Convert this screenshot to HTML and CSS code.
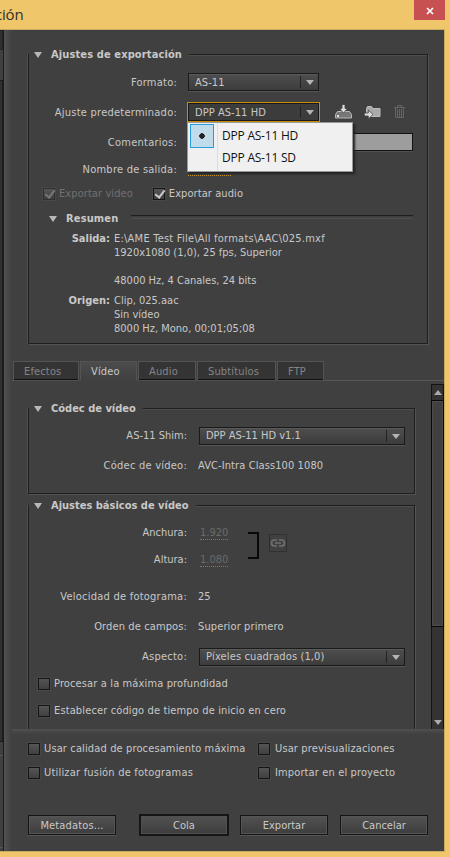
FILE: index.html
```
<!DOCTYPE html>
<html lang="es">
<head>
<meta charset="utf-8">
<title>Ajustes de exportación</title>
<link rel="stylesheet" href="styles.css">
</head>
<body>
<div class="window">
  <header class="titlebar"><span class="title">ción</span>
    <button class="close" aria-label="Cerrar"><svg width="8" height="8" viewBox="0 0 8 8"><path d="M1 1l6 6M7 1L1 7"/></svg></button>
  </header>
  <div class="body">
    <aside class="side"><div class="side-a"></div><div class="side-b"></div><div class="side-c"></div></aside>
    <div class="divider"></div>
    <main class="main">
      <section class="group export">
        <h2 class="legend wide"><i class="tri"></i>Ajustes de exportación</h2>
        <div class="row r30"><label>Formato:</label><div class="combo w131"><span>AS-11</span><i class="arrow"></i></div></div>
        <div class="row r30"><label>Ajuste predeterminado:</label><div class="combo w131 focus"><span>DPP AS-11 HD</span><i class="arrow"></i>
            <ul class="menu"><li class="sel">DPP AS-11 HD</li><li>DPP AS-11 SD</li></ul></div>
          <div class="tools">
            <svg width="17" height="16" viewBox="0 0 17 16"><path fill="#777" stroke="#b8b8b8" d="M2.500 7.500h12l2 3v3.500h-16v-3.500z"/><path fill="#ddd" stroke="#404040" stroke-width=".8" d="M7 .5h3v4h2.500L8.500 9l-4-4.500H7z"/><path fill="#e4e4e4" d="M2 11h2v2H2z"/></svg>
            <svg width="17" height="16" viewBox="0 0 17 16"><path fill="#aaa" stroke="#bbb" d="M2.500 10V4.500l1-2h4l1.500 2h7v8H6"/><path fill="#ddd" stroke="#404040" stroke-width=".8" d="M.3 9h4V6l4.700 4.500-4.700 4.500v-3h-4z"/></svg>
            <svg width="13" height="16" viewBox="0 0 13 16"><path fill="none" stroke="#656565" d="M1 3.500h11M4.500 3V1.500h4V3M2.500 4v9.500h8V4M4.500 5v8M6.500 5v8M8.500 5v8"/></svg>
          </div></div>
        <div class="row r30"><label>Comentarios:</label><div class="field"></div></div>
        <div class="row r24"><label>Nombre de salida:</label><span class="outname">025.mxf</span></div>
        <div class="checks"><span class="check off"><i class="box on"></i>Exportar vídeo</span><span class="check"><i class="box on"></i>Exportar audio</span></div>
        <h3 class="summary"><i class="tri"></i><span>Resumen</span></h3>
        <dl class="info">
          <dt>Salida:</dt><dd><p class="path">E:\AME Test File\All formats\AAC\025.mxf</p><p>1920x1080 (1,0), 25 fps, Superior</p><br><p>48000 Hz, 4 Canales, 24 bits</p></dd>
          <dt>Origen:</dt><dd><p>Clip, 025.aac</p><p>Sin vídeo</p><p>8000 Hz, Mono, 00;01;05;08</p></dd>
        </dl>
      </section>
      <nav class="tabs"><span class="tab t1">Efectos</span><span class="tab t2 active">Vídeo</span><span class="tab t3">Audio</span><span class="tab t4">Subtítulos</span><span class="tab t5">FTP</span></nav>
      <div class="scroll">
        <div class="content">
          <section class="group codec">
            <h2 class="legend"><i class="tri"></i>Códec de vídeo</h2>
            <div class="row r30"><label class="tight">AS-11 Shim:</label><div class="combo w206"><span>DPP AS-11 HD v1.1</span><i class="arrow"></i></div></div>
            <div class="row r30"><label>Códec de vídeo:</label><span class="val wider">AVC-Intra Class100 1080</span></div>
          </section>
          <section class="group basic">
            <h2 class="legend"><i class="tri"></i>Ajustes básicos de vídeo</h2>
            <div class="dims">
              <div class="dimrows">
                <div class="row r27"><label class="tight">Anchura:</label><span class="num">1.920</span></div>
                <div class="row r27"><label class="tight">Altura:</label><span class="num">1.080</span></div>
              </div>
              <i class="bracket"></i>
              <div class="link"><svg width="16" height="10" viewBox="0 0 16 10"><path d="M7 2H4.500a3 3 0 0 0 0 6H7M9 2h2.500a3 3 0 0 1 0 6H9M5 5h6"/></svg></div>
            </div>
            <div class="row r30"><label>Velocidad de fotograma:</label><span class="val">25</span></div>
            <div class="row r30"><label class="mid">Orden de campos:</label><span class="val spaced">Superior primero</span></div>
            <div class="row r30"><label>Aspecto:</label><div class="combo w206"><span class="spaced">Píxeles cuadrados (1,0)</span><i class="arrow"></i></div></div>
            <div class="check line first"><i class="box"></i>Procesar a la máxima profundidad</div>
            <div class="check line"><i class="box"></i>Establecer código de tiempo de inicio en cero</div>
          </section>
        </div>
        <div class="bar"><div class="up"></div><div class="thumb"></div><div class="down"></div></div>
      </div>
      <footer class="foot">
        <div class="options">
          <span class="check"><i class="box"></i>Usar calidad de procesamiento máxima</span><span class="check right"><i class="box"></i>Usar previsualizaciones</span>
          <span class="check wider"><i class="box"></i>Utilizar fusión de fotogramas</span><span class="check right"><i class="box"></i>Importar en el proyecto</span>
        </div>
        <div class="buttons"><button class="meta">Metadatos...</button><button class="default">Cola</button><button>Exportar</button><button>Cancelar</button></div>
      </footer>
    </main>
  </div>
</div>
</body>
</html>
```
FILE: styles.css
```
* { box-sizing: border-box; margin: 0; padding: 0; }
body { width: 450px; height: 857px; overflow: hidden; background: #f0c66a; color: #c8c8c8; font: 11px/14px "DejaVu Sans Condensed", "DejaVu Sans", sans-serif; font-stretch: condensed; white-space: nowrap; }
button { font: inherit; color: inherit; }
.window { width: 450px; height: 857px; }
.titlebar { height: 29px; display: flex; justify-content: space-between; padding-right: 5px; color: #33302a; font: 15px/30px "Open Sans", sans-serif; }
.title { margin-left: -5px; line-height: 28px; letter-spacing: -.2px; }
.close { width: 31px; height: 20px; border: 0; background: #c75050; }
.close svg { display: block; margin: 1px auto 0; fill: none; stroke: #fff; stroke-width: 1.7; }
.body { display: flex; width: 445px; height: 823px; border: solid #c9a95d; border-width: 1px 1px 1px 0; background: #404040; }
.side { width: 3px; flex: none; }
.side-a { height: 20px; background: #303030; border: 1px solid #222; border-left: 0; }
.side-b { height: 662px; margin-top: 30px; background: #303030; border: 1px solid #1c1c1c; border-left: 0; }
.side-c { height: 93px; margin-top: 13px; border: solid #555; border-width: 1px 0; }
.divider { width: 9px; flex: none; background: linear-gradient(90deg, #1c1c1c 1px, #525252 1px, #484848 5px, #404040); }
.main { width: 432px; flex: none; display: flex; flex-direction: column; }
.group { position: relative; border: 1px solid #1e1e1e; box-shadow: 1px 1px 0 #545454, -1px 0 0 #505050, inset 0 1px 0 #4e4e4e; }
.export { width: 400px; height: 290px; margin: 24px 0 0 16px; }
.legend { position: relative; display: flex; align-items: center; width: max-content; height: 14px; margin: -7px 0 0 0; padding: 0 7px 0 5px; background: #404040; font-size: 11px; font-weight: bold; }
.wide { letter-spacing: .12px; }
.tri { width: 0; height: 0; margin-right: 9px; border: 4px solid transparent; border-top: 6px solid #b8b8b8; border-bottom: 0; }
.row { display: flex; align-items: center; }
.r30 { height: 30px; }
.r24 { height: 24px; }
.r27 { height: 27px; }
.export .legend { margin-bottom: 5px; }
.row label { width: 148px; flex: none; margin-right: 11px; text-align: right; letter-spacing: .24px; }
.export .row label { padding-top: 2px; }
.row label.tight { letter-spacing: 0; }
.row label.mid { letter-spacing: .12px; }
.spaced { letter-spacing: .12px; }
.combo { position: relative; display: flex; height: 18px; flex: none; align-items: center; border: 1px solid #1a1a1a; background: linear-gradient(#4e4e4e, #3c3c3c); box-shadow: 0 1px 0 #555, inset 0 1px 0 #5a5a5a; padding-left: 6px; line-height: 16px; }
.w131 { width: 131px; }
.w131 > span { padding-top: 1px; letter-spacing: .06px; }
.w206 { width: 206px; }
.combo > span { flex: 1; }
.arrow { display: flex; align-items: center; justify-content: center; width: 18px; height: 12px; border-left: 1px solid #222; }
.arrow::after { content: ""; border: 4px solid transparent; border-top: 5px solid #b4b4b4; border-bottom: 0; }
.focus { background: #3c3c3c; box-shadow: 0 0 0 1px #c98c08; }
.menu { position: absolute; z-index: 2; left: -2px; top: 18px; width: 166px; height: 50px; padding: 1px 2px; list-style: none; color: #111; border: 1px solid #999; background: linear-gradient(90deg, transparent 29px, #ddd 29px, #ddd 30px, transparent 30px) #f0f0f0; box-shadow: 2px 2px 2px #222; font: 12px/24px "Open Sans", sans-serif; letter-spacing: -.22px; }
.menu li { height: 22px; padding-left: 32px; position: relative; }
.sel::before { content: ""; position: absolute; left: 0; top: 0; width: 22px; height: 22px; border: 1px solid #269edc; background: radial-gradient(circle, #222 2.500px, transparent 3px) #c0dcea; }
.tools { display: flex; align-items: center; margin-left: 16px; gap: 12px; }
.tools svg { display: block; }
.field { width: 225px; height: 18px; border: 1px solid #111; background: #9d9d9d; box-shadow: 0 1px #505050; }
.outname { width: 44px; height: 14px; line-height: 13px; color: #d09a18; background: repeating-linear-gradient(90deg, #d89a10 0 1px, transparent 1px 2px) left bottom / 100% 1px no-repeat; }
.checks { display: flex; gap: 20px; height: 24px; align-items: center; padding-left: 14px; padding-top: 1px; }
.check { display: flex; align-items: center; letter-spacing: .13px; }
.checks .check { letter-spacing: .08px; }
.wider { letter-spacing: .2px; }
.box { width: 12px; height: 12px; flex: none; margin-right: 4px; border: 1px solid #151515; background: linear-gradient(#555, #404040); outline: 1px solid #484848; position: relative; }
.box.on::after { content: ""; position: absolute; left: 3px; top: -1px; width: 4px; height: 8px; border: solid #ccc; border-width: 0 2px 2px 0; transform: rotate(38deg); }
.off { color: #707070; }
.off .box { border-color: #303030; }
.off .box.on::after { border-color: #777; }
.summary { display: flex; align-items: center; height: 14px; margin: 7px 14px 0 20px; font-size: 11px; letter-spacing: .15px; }
.summary::after { content: ""; flex: 1; height: 2px; margin: -4px 0 0 13px; border-top: 1px solid #1e1e1e; border-bottom: 1px solid #4e4e4e; }
.info { display: grid; grid-template-columns: 81px auto; column-gap: 4px; row-gap: 6px; margin-top: 6px; }
.info dt { text-align: right; font-weight: bold; }
.path { letter-spacing: .23px; }
.tabs { display: flex; height: 20px; margin-top: 17px; }
.tabs::before { content: ""; width: 1px; border-bottom: 1px solid #505050; }
.tabs::after { content: ""; flex: 1; border-bottom: 1px solid #585858; }
.tab { height: 20px; margin-right: 1px; padding-left: 10px; line-height: 19px; letter-spacing: .15px; color: #858585; border: 1px solid #545454; border-bottom-color: #505050; background: #343434; box-shadow: inset 0 -1px #111; }
.t1 { width: 66px; } .t2 { width: 57px; } .t3 { width: 58px; } .t4 { width: 79px; } .t5 { width: 47px; margin: 0; }
.tab.active { background: linear-gradient(#4c4c4c, #404040); color: #c8c8c8; border-bottom-color: #404040; box-shadow: none; }
.scroll { display: flex; height: 348px; }
.content { width: 419px; overflow: hidden; padding: 27px 0 0 16px; }
.content .group { width: 387px; }
.codec { height: 86px; }
.codec .legend { margin-bottom: 5px; }
.content .row label { width: 158px; margin-right: 12px; }
.content .row .val { margin-left: -1px; }
.val.wider { letter-spacing: .1px; }
.basic { height: 300px; margin-top: 11px; }
.basic .legend { margin-bottom: 6px; }
.dims { display: flex; align-items: center; margin-bottom: 9px; }
.num { margin-left: 1px; color: #6a6a6a; border-bottom: 1px dotted #777; line-height: 13px; }
.bracket { width: 11px; height: 27px; margin: -1px 0 0 20px; border: 2px solid #080808; border-left: 0; }
.link { display: flex; align-items: center; justify-content: center; width: 18px; height: 18px; margin-left: 10px; margin-top: -6px; border: 1px solid #303030; }
.link path { fill: none; stroke: #707070; stroke-width: 1.700; }
.line { height: 27px; padding: 0 0 1px 9px; }
.first { margin-top: -1px; }
.bar { width: 13px; margin-top: 3px; display: flex; flex-direction: column; background: #333; border: solid #141414; border-width: 1px 1px 0; }
.up, .down { height: 15px; display: flex; align-items: center; justify-content: center; }
.up::after, .down::after { content: ""; border: 4px solid transparent; border-bottom: 5px solid #aaa; border-top: 0; }
.down { height: 13px; }
.down::after { border-top: 5px solid #aaa; border-bottom: 0; }
.thumb { height: 227px; margin: 0 -1px auto; border: 1px solid #080808; background: #404040; box-shadow: inset 0 0 0 1px #4c4c4c; }
.foot { padding: 8px 0 0 16px; background: linear-gradient(#505050, #404040 5px); background-size: 100% 6px; background-repeat: no-repeat; }
.options { display: grid; grid-template-columns: 230px auto; grid-auto-rows: 24px; }
.right .box { margin-right: 5px; }
.buttons { display: flex; gap: 12px; margin-top: 30px; }
.buttons button { width: 88px; flex: none; height: 20px; border: 1px solid #151515; background: linear-gradient(#525252, #3d3d3d); box-shadow: 0 1px #555, inset 0 0 0 1px #555; line-height: 17px; }
.meta { margin-right: 12px; letter-spacing: .15px; }
.buttons .default { box-shadow: 0 0 0 1px #151515, inset 0 0 0 1px #505050; }
```
